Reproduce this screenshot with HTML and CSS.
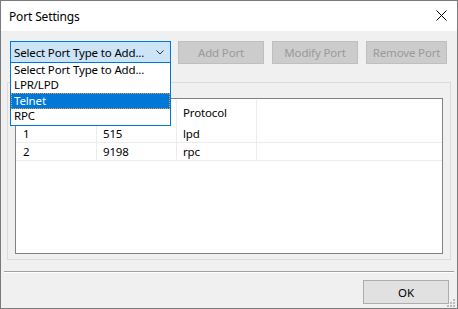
FILE: index.html
```html
<!DOCTYPE html>
<html>
<head>
  <title>Port Settings</title>
  <link rel="stylesheet" href="styles.css">
</head>
<body>
  <div class="window">
    <div class="titlebar">
      <span class="title">Port Settings</span>
      <svg class="close" width="11" height="11" viewBox="0 0 11 11">
        <path d="M0.5 0.5 L10.5 10.5 M10.5 0.5 L0.5 10.5" stroke="#000" stroke-width="1" fill="none" />
      </svg>
    </div>

    <div class="content">
      <div class="toolbar">
        <div class="combo-wrap">
          <div class="combo">
            <span>Select Port Type to Add...</span>
            <svg class="chevron" width="8" height="5" viewBox="0 0 8 5">
              <path d="M0.5 0.5 L4 4 L7.5 0.5" stroke="#333" stroke-width="1" fill="none" />
            </svg>
          </div>
          <ul class="dropdown">
            <li>Select Port Type to Add...</li>
            <li>LPR/LPD</li>
            <li class="selected">Telnet</li>
            <li>RPC</li>
          </ul>
        </div>
        <button class="button add" disabled>Add Port</button>
        <button class="button modify" disabled>Modify Port</button>
        <button class="button remove" disabled>Remove Port</button>
      </div>

      <div class="groupbox">
        <div class="listview">
          <!-- first two headers sit under the open dropdown -->
          <div class="row header">
            <div class="cell"></div>
            <div class="cell"></div>
            <div class="cell">Protocol</div>
            <div class="cell"></div>
          </div>
          <div class="row">
            <div class="cell">1</div>
            <div class="cell">515</div>
            <div class="cell">lpd</div>
            <div class="cell"></div>
          </div>
          <div class="row">
            <div class="cell">2</div>
            <div class="cell">9198</div>
            <div class="cell">rpc</div>
            <div class="cell"></div>
          </div>
        </div>
      </div>

      <div class="separator"></div>

      <div class="footer">
        <button class="button ok">OK</button>
      </div>
    </div>

    <svg class="grip" width="9" height="9" viewBox="0 0 9 9">
      <rect x="7" y="1" width="2" height="2" fill="#bcbcbc" />
      <rect x="4" y="4" width="2" height="2" fill="#bcbcbc" />
      <rect x="7" y="4" width="2" height="2" fill="#bcbcbc" />
      <rect x="1" y="7" width="2" height="2" fill="#bcbcbc" />
      <rect x="4" y="7" width="2" height="2" fill="#bcbcbc" />
      <rect x="7" y="7" width="2" height="2" fill="#bcbcbc" />
    </svg>
  </div>
</body>
</html>
```

FILE: styles.css
```css
* {
  margin: 0;
  padding: 0;
  box-sizing: border-box;
}

body {
  font-family: "Noto Sans", "Open Sans", sans-serif;
  font-size: 11.5px;
  letter-spacing: -0.15px;
  color: #000;
  background: #f0f0f0;
}

.window {
  position: relative;
  width: 458px;
  height: 309px;
  border: 1px solid #7a7a7a;
  display: flex;
  flex-direction: column;
  background: #f0f0f0;
}

.titlebar {
  height: 30px;
  background: #fff;
  display: flex;
  align-items: center;
  justify-content: space-between;
  padding: 0 10px 0 8px;
}

.title {
  font-size: 12px;
}

.close {
  display: block;
  margin-top: -1px;
}

.content {
  flex: 1;
  display: flex;
  flex-direction: column;
  padding: 10px 0 0 0;
}

.toolbar {
  display: flex;
  height: 23px;
  padding-left: 9px;
}

.combo-wrap {
  position: relative;
  width: 161px;
  margin-right: 7px;
}

.combo {
  height: 22px;
  border: 1px solid #0078d7;
  background: #cce4f7;
  display: flex;
  align-items: center;
  justify-content: space-between;
  padding: 0 6px 0 3px;
}

.chevron {
  display: block;
}

.dropdown {
  position: absolute;
  top: 22px;
  left: 0;
  width: 161px;
  list-style: none;
  background: #fff;
  border: 1px solid #0078d7;
  border-top: none;
  z-index: 2;
  padding-bottom: 1px;
}

.dropdown li {
  height: 15px;
  line-height: 14px;
  padding-left: 2px;
  border: 1px solid transparent;
  border-top: 0;
}

.dropdown li.selected {
  background: #0078d7;
  color: #fff;
  border: 1px dotted #e6a04a;
  line-height: 14px;
  height: 16px;
}

.button {
  font-family: inherit;
  font-size: 11.5px;
  letter-spacing: -0.15px;
  height: 23px;
  border: 1px solid #adadad;
  background: #e1e1e1;
  color: #000;
}

.button:disabled {
  background: #cccccc;
  border-color: #bfbfbf;
  color: #9a9a9a;
}

.add {
  width: 86px;
  margin-right: 8px;
}

.modify {
  width: 86px;
  margin-right: 8px;
}

.remove {
  width: 81px;
}

.groupbox {
  margin: 18px 6px 0 6px;
  height: 178px;
  border: 1px solid #dcdcdc;
  padding: 15px 7px 6px 7px;
}

.listview {
  height: 156px;
  background: #fff;
  border: 1px solid #828282;
}

.row {
  display: flex;
  height: 18px;
  border-bottom: 1px solid #ececec;
  align-items: center;
}

.row.header {
  height: 26px;
  border-bottom: none;
  padding-top: 1px;
}

.cell {
  width: 80px;
  height: 100%;
  display: flex;
  align-items: center;
  padding-left: 6px;
  border-right: 1px solid #ececec;
}

.cell:first-child {
  width: 81px;
  padding-left: 7px;
}

.cell:last-child {
  flex: 1;
  border-right: none;
}

.separator {
  margin: 11px 3px 0 3px;
  height: 2px;
  border-top: 1px solid #a0a0a0;
  border-bottom: 1px solid #fff;
}

.footer {
  display: flex;
  justify-content: flex-end;
  padding: 7px 8px 0 0;
}

.ok {
  width: 86px;
  height: 24px;
}

.grip {
  position: absolute;
  right: 2px;
  bottom: 1px;
}
```
